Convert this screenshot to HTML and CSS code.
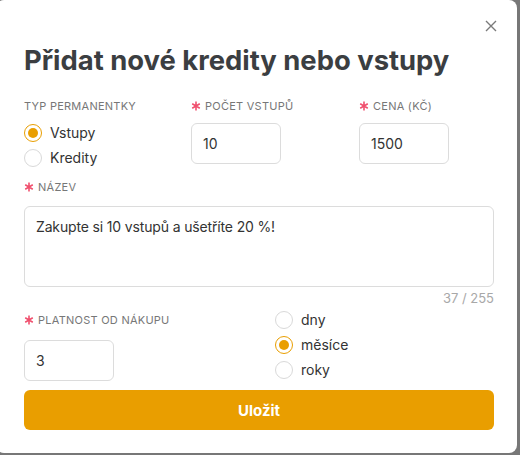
FILE: index.html
```html
<!DOCTYPE html>
<html lang="cs">
<head>
<meta charset="utf-8">
<title>Přidat nové kredity nebo vstupy</title>
<link rel="stylesheet" href="styles.css">
</head>
<body>
<div class="card">
  <button class="close" aria-label="Zavřít">
    <svg width="12" height="12" viewBox="0 0 12 12"><path d="M1 1L11 11M11 1L1 11" stroke="#7a7a7a" stroke-width="1.4" fill="none"/></svg>
  </button>
  <h1 class="title">Přidat nové kredity nebo vstupy</h1>

  <div class="row1">
    <div class="field">
      <div class="label">TYP PERMANENTKY</div>
      <div class="radios first">
        <div class="radio-row"><span class="radio on"></span><span class="rtext">Vstupy</span></div>
        <div class="radio-row"><span class="radio"></span><span class="rtext">Kredity</span></div>
      </div>
    </div>
    <div class="field">
      <div class="label"><svg class="req" viewBox="0 0 10 10"><path d="M5 0.6V9.4M1.2 2.8L8.8 7.2M8.8 2.8L1.2 7.2" stroke="#f0506e" stroke-width="1.6"/></svg>POČET VSTUPŮ</div>
      <div class="input small">10</div>
    </div>
    <div class="field">
      <div class="label"><svg class="req" viewBox="0 0 10 10"><path d="M5 0.6V9.4M1.2 2.8L8.8 7.2M8.8 2.8L1.2 7.2" stroke="#f0506e" stroke-width="1.6"/></svg>CENA (KČ)</div>
      <div class="input small">1500</div>
    </div>
  </div>

  <div class="label name-label"><svg class="req" viewBox="0 0 10 10"><path d="M5 0.6V9.4M1.2 2.8L8.8 7.2M8.8 2.8L1.2 7.2" stroke="#f0506e" stroke-width="1.6"/></svg>NÁZEV</div>
  <div class="textarea">Zakupte si 10 vstupů a ušetříte 20 %!</div>
  <div class="counter">37 / 255</div>

  <div class="row3">
    <div class="field">
      <div class="label validity-label"><svg class="req" viewBox="0 0 10 10"><path d="M5 0.6V9.4M1.2 2.8L8.8 7.2M8.8 2.8L1.2 7.2" stroke="#f0506e" stroke-width="1.6"/></svg>PLATNOST OD NÁKUPU</div>
      <div class="input small validity">3</div>
    </div>
    <div class="radios units">
      <div class="radio-row"><span class="radio"></span><span class="rtext">dny</span></div>
      <div class="radio-row"><span class="radio on"></span><span class="rtext">měsíce</span></div>
      <div class="radio-row"><span class="radio"></span><span class="rtext">roky</span></div>
    </div>
  </div>

  <button class="save">Uložit</button>
</div>
</body>
</html>
```
FILE: styles.css
```css
html, body {
  margin: 0;
  padding: 0;
}
body {
  width: 520px;
  height: 455px;
  background: #777777;
  overflow: hidden;
  font-family: Inter, "Noto Sans", sans-serif;
  color: #3a3a3a;
}
.card {
  position: relative;
  margin-left: -4px;
  width: 521px;
  height: 453px;
  box-sizing: border-box;
  background: #fff;
  border-radius: 8px;
  padding: 44px 23px 0 28px;
}
.close {
  position: absolute;
  top: 19px;
  right: 19px;
  width: 14px;
  height: 14px;
  padding: 0;
  border: 0;
  background: none;
  display: flex;
  align-items: center;
  justify-content: center;
}
.title {
  margin: 0;
  font-size: 27.4px;
  line-height: 32px;
  font-weight: 700;
  color: #3b3e41;
}
.row1 {
  margin-top: 23px;
  display: grid;
  grid-template-columns: 167px 168px 1fr;
  height: 71px;
}
.label {
  font-size: 11px;
  line-height: 14px;
  color: #777;
  display: flex;
  align-items: center;
  letter-spacing: 0.25px;
}
.req {
  width: 10px;
  height: 10px;
  margin-right: 4px;
}
.input {
  box-sizing: border-box;
  border: 1px solid #dcdcdc;
  border-radius: 6px;
  height: 41px;
  font-size: 14px;
  display: flex;
  align-items: center;
  padding-left: 11px;
  color: #333;
}
.small {
  width: 90px;
  margin-top: 10px;
}
.radios.first {
  margin-top: 7px;
}
.radio-row {
  height: 25px;
  display: flex;
  align-items: center;
}
.radio {
  box-sizing: border-box;
  width: 18px;
  height: 18px;
  border: 1px solid #d9d9d9;
  border-radius: 50%;
  display: flex;
  align-items: center;
  justify-content: center;
  margin-right: 8px;
}
.radio.on {
  border-color: #e99e00;
}
.radio.on::after {
  content: "";
  width: 10px;
  height: 10px;
  border-radius: 50%;
  background: #e99e00;
}
.rtext {
  font-size: 14px;
  color: #333;
}
.name-label {
  margin-top: 10px;
}
.textarea {
  margin-top: 12px;
  box-sizing: border-box;
  height: 81px;
  border: 1px solid #dcdcdc;
  border-radius: 6px;
  padding: 10px 11px;
  font-size: 14px;
  line-height: 20px;
  color: #333;
  letter-spacing: -0.15px;
}
.counter {
  margin-top: 2px;
  text-align: right;
  font-size: 13px;
  line-height: 18px;
  color: #a8a8a8;
}
.row3 {
  display: grid;
  grid-template-columns: 251px 1fr;
  height: 76px;
}
.validity-label {
  margin-top: 6px;
}
.validity {
  margin-top: 13px;
}
.units {
  margin-top: 0;
}
.save {
  margin-top: 7px;
  width: 100%;
  height: 40px;
  border: 0;
  border-radius: 6px;
  background: #e99e00;
  color: #fff;
  font-family: Inter, "Noto Sans", sans-serif;
  font-size: 15px;
  font-weight: 700;
}
```
